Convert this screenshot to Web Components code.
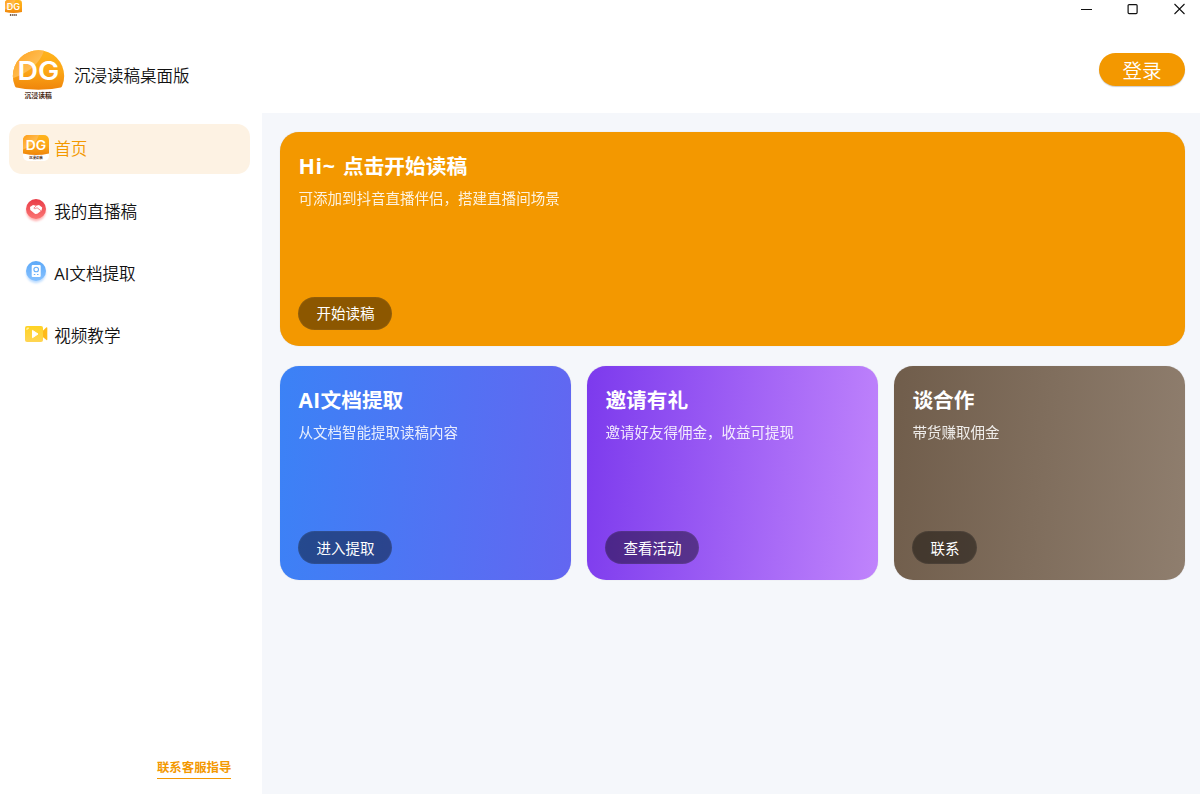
<!DOCTYPE html>
<html lang="zh-CN">
<head>
<meta charset="utf-8">
<title>沉浸读稿桌面版</title>
<style>
html,body{margin:0;height:100%;overflow:hidden;background:#fff}
body{font-family:"Open Sans","Noto Sans CJK SC",sans-serif;color:#111}
</style>
</head>
<body>
<reader-app></reader-app>
<script>
function define(name, html) {
  const template = document.createElement('template');
  template.innerHTML = html;
  customElements.define(name, class extends HTMLElement {
    constructor() {
      super();
      this.attachShadow({ mode: 'open' }).append(template.content.cloneNode(true));
    }
  });
}

/* Brand mark: shape="round" gives the circular variant; the host size sets the scale. */
customElements.define('brand-logo', class extends HTMLElement {
  connectedCallback() {
    const round = this.getAttribute('shape') === 'round';
    const clip = round ? '<circle cx="26" cy="26.5" r="25.2"/>' : '<rect width="52" height="52" rx="10"/>';
    const caption = this.hasAttribute('caption');
    this.attachShadow({ mode: 'open' }).innerHTML = `
      <style>:host{display:block;flex:none}svg{display:block;width:100%;height:100%}</style>
      <svg viewBox="0 0 52 52">
        <defs>
          <clipPath id="c">${clip}</clipPath>
          <linearGradient id="g" x1="0" y1="0" x2="0" y2="1"><stop offset="0" stop-color="#ffb41c"/><stop offset=".55" stop-color="#fca616"/><stop offset="1" stop-color="#ef850c"/></linearGradient>
          <linearGradient id="h" x1="0" y1="0" x2="1" y2="1"><stop offset="0" stop-color="#ff9d18"/><stop offset="1" stop-color="#ffd277"/></linearGradient>
        </defs>
        <g clip-path="url(#c)">
          <rect width="52" height="52" fill="#fff"/>
          <path d="M0 0H52V37Q26 43 0 37Z" fill="url(#g)"/>
          <path d="M0 0H32Q26 20 0 29Z" fill="url(#h)"/>
        </g>
        <text x="5.5" y="30" textLength="41" lengthAdjust="spacingAndGlyphs" font-family="Inter,sans-serif" font-weight="600" font-size="25.5" fill="#fff">DG</text>
        ${caption ? `<text x="12.2" y="48.4" textLength="27" font-family="Noto Sans CJK SC,sans-serif" font-weight="700" font-size="6.7" fill="#4b2b17">沉浸读稿</text>` : '<path d="M15 46h4m2 0h3m2 0h4m2 0h4" stroke="#4b2b17" stroke-width="4.5"/>'}
      </svg>`;
  }
});

define('window-bar', `
<style>
:host{display:flex;justify-content:space-between;height:19px;box-sizing:border-box;padding:0 14px 0 5px}
brand-logo{width:17px;height:17px}
.controls{display:flex;gap:35px;align-items:flex-start;padding-top:3px}
svg{width:12px;height:12px;display:block;fill:none;stroke:#111}
</style>
<brand-logo></brand-logo>
<div class="controls">
<svg viewBox="0 0 12 12"><path d="M1 6.5h11"/></svg>
<svg viewBox="0 0 12 12"><rect x="1.1" y="1.6" width="9" height="9" rx="1" stroke-width="1.2"/></svg>
<svg viewBox="0 0 12 12"><path d="M.5 1l10 10M10.5 1L.5 11" stroke-width="1.1"/></svg>
</div>`);

define('app-header', `
<style>
:host{display:flex;justify-content:space-between;height:94px;box-sizing:border-box;padding:30px 15px 0 12px}
.brand{display:flex;align-items:center;gap:9px;height:53px;font-size:16.5px;font-weight:350;font-family:"Noto Sans CJK SC DemiLight","Noto Sans CJK SC",sans-serif}
.brand span{line-height:24px;padding-bottom:1px}
brand-logo{width:53px;height:53px}
button{width:86px;height:33px;padding:0;margin-top:4px;border:0;border-radius:17px;background:#f39800;color:#fff;font:350 19.5px/32px "Noto Sans CJK SC",sans-serif;box-shadow:0 1px 1px #0003}
</style>
<div class="brand"><brand-logo shape="round" caption></brand-logo><span>沉浸读稿桌面版</span></div>
<button>登录</button>`);

define('nav-item', `
<style>
:host{display:flex;align-items:center;height:50px;box-sizing:border-box;padding:1px 0 0 14px;gap:5px;border-radius:13px;font-size:16.6px;font-weight:350;line-height:24px}
:host([active]){background:#fdf2e3;color:#f39800;padding-top:0}
::slotted([slot=icon]){display:block;width:26px;height:26px;flex:none;position:relative;top:-1.4px}
</style>
<slot name="icon"></slot><slot></slot>`);

define('side-nav', `
<style>
:host{display:flex;flex-direction:column;width:262px;flex:none;box-sizing:border-box;padding:11px 12.5px 15px 9.2px;gap:12px}
.spacer{flex:1}
.latin{font-weight:400}
a{align-self:flex-end;margin-right:18.2px;color:#f39800;font-size:12.4px;font-weight:700;line-height:20px;border-bottom:1.5px solid #f39800;white-space:nowrap}
</style>
<nav-item active><brand-logo slot="icon" caption></brand-logo>首页</nav-item>
<nav-item><svg slot="icon" viewBox="0 0 26 26">
<defs><linearGradient id="red" x2="0" y2="1"><stop stop-color="#e93b46"/><stop offset="1" stop-color="#fb7674"/></linearGradient><filter id="glow"><feGaussianBlur stdDeviation="1"/></filter></defs>
<circle cx="13" cy="14.5" r="9.7" fill="#f66" opacity=".5" filter="url(#glow)"/><circle cx="13" cy="12" r="10" fill="url(#red)"/>
<path d="M7 10l3-2 3 .8 3-.8 3.2 2.4-.7 3-4.2 3.4-2.1.2L7.3 13Z" fill="#fff"/><path d="M13.2 9l-2.4 2.2c1 1 2.2.3 3.2-.5l4.2 3.2" fill="none" stroke="#ee5960" stroke-width=".7"/></svg>我的直播稿</nav-item>
<nav-item><svg slot="icon" viewBox="0 0 26 26">
<defs><linearGradient id="blue" x2="0" y2="1"><stop stop-color="#5da9f8"/><stop offset="1" stop-color="#86c1ff"/></linearGradient></defs>
<circle cx="13" cy="14.5" r="9.7" fill="#79b9ff" opacity=".5" filter="url(#glow)"/><circle cx="13" cy="12" r="10" fill="url(#blue)"/>
<rect x="8.7" y="6" width="9" height="12" rx="1" fill="#fff"/><circle cx="13.2" cy="10.5" r="2.3" fill="none" stroke="#69aff9" stroke-width="1.1"/><path d="M10.8 15.5h1.5m1.7 0h1.5" stroke="#69aff9" stroke-width="1.1"/></svg><span><span class="latin">AI</span>文档提取</span></nav-item>
<nav-item><svg slot="icon" viewBox="0 0 26 26">
<defs><linearGradient id="yellow" x2="0" y2="1"><stop stop-color="#ffd323"/><stop offset="1" stop-color="#ffd553"/></linearGradient></defs>
<path d="M18.5 11L23.5 6.3Q24.3 5.8 24.3 7V18.3Q24.3 19.6 23.5 19L18.5 15Z" fill="#ffba19"/><rect x="2" y="5" width="18" height="16" rx="2" fill="url(#yellow)"/><path d="M9.5 9.4v7.3L15 13Z" fill="#fff" stroke="#fff" stroke-linejoin="round"/><path d="M4 9V7.2h2" fill="none" stroke="#fff5bd" stroke-width="1"/></svg>视频教学</nav-item>
<div class="spacer"></div>
<a>联系客服指导</a>`);

define('action-card', `
<style>
:host{display:flex;flex-direction:column;align-items:flex-start;box-sizing:border-box;height:214px;padding:19px 18.4px 16px;border-radius:19px;color:#fff;background:var(--fill);box-shadow:0 0 1px #8886}
h2{margin:0;font-size:20.7px;line-height:30px;font-weight:700}
p{margin:5px 0 0;font-size:14.52px;line-height:24px;opacity:.88}
button{margin-top:auto;height:33px;border:0;border-radius:17px;padding:0 18px;background:#0000006c;color:#fff;font:400 14.5px/32px "Noto Sans CJK SC",sans-serif;box-shadow:inset 0 0 1px 1px #ffffff0c}
</style>
<h2><slot name="title"></slot></h2><p><slot></slot></p><button><slot name="action"></slot></button>`);

define('home-page', `
<style>
:host{flex:1;display:grid;grid-template-columns:repeat(3,1fr);align-content:start;gap:20.5px 16px;box-sizing:border-box;padding:18.5px 15px 0 18px;background:#f5f7fb}
.hero{grid-column:1/-1;--fill:#f39800}
.hero .latin{font-size:21.5px;line-height:1;letter-spacing:.7px;margin-right:1.8px}
.ai .latin{letter-spacing:.5px}
.ai{--fill:linear-gradient(95deg,#3b82f6,#6366f1)}
.gift{--fill:linear-gradient(95deg,#7c3aed,#c084fc)}
.coop{--fill:linear-gradient(95deg,#705d4b,#8f7e6e)}
</style>
<action-card class="hero"><span slot="title"><span class="latin">Hi~</span> 点击开始读稿</span>可添加到抖音直播伴侣，搭建直播间场景<span slot="action">开始读稿</span></action-card>
<action-card class="ai"><span slot="title"><span class="latin">AI</span>文档提取</span>从文档智能提取读稿内容<span slot="action">进入提取</span></action-card>
<action-card class="gift"><span slot="title">邀请有礼</span>邀请好友得佣金，收益可提现<span slot="action">查看活动</span></action-card>
<action-card class="coop"><span slot="title">谈合作</span>带货赚取佣金<span slot="action">联系</span></action-card>`);

define('reader-app', `
<style>:host{display:flex;flex-direction:column;height:100vh}main{display:flex;flex:1;min-height:0}</style>
<window-bar></window-bar><app-header></app-header><main><side-nav></side-nav><home-page></home-page></main>`);
</script>
</body>
</html>
